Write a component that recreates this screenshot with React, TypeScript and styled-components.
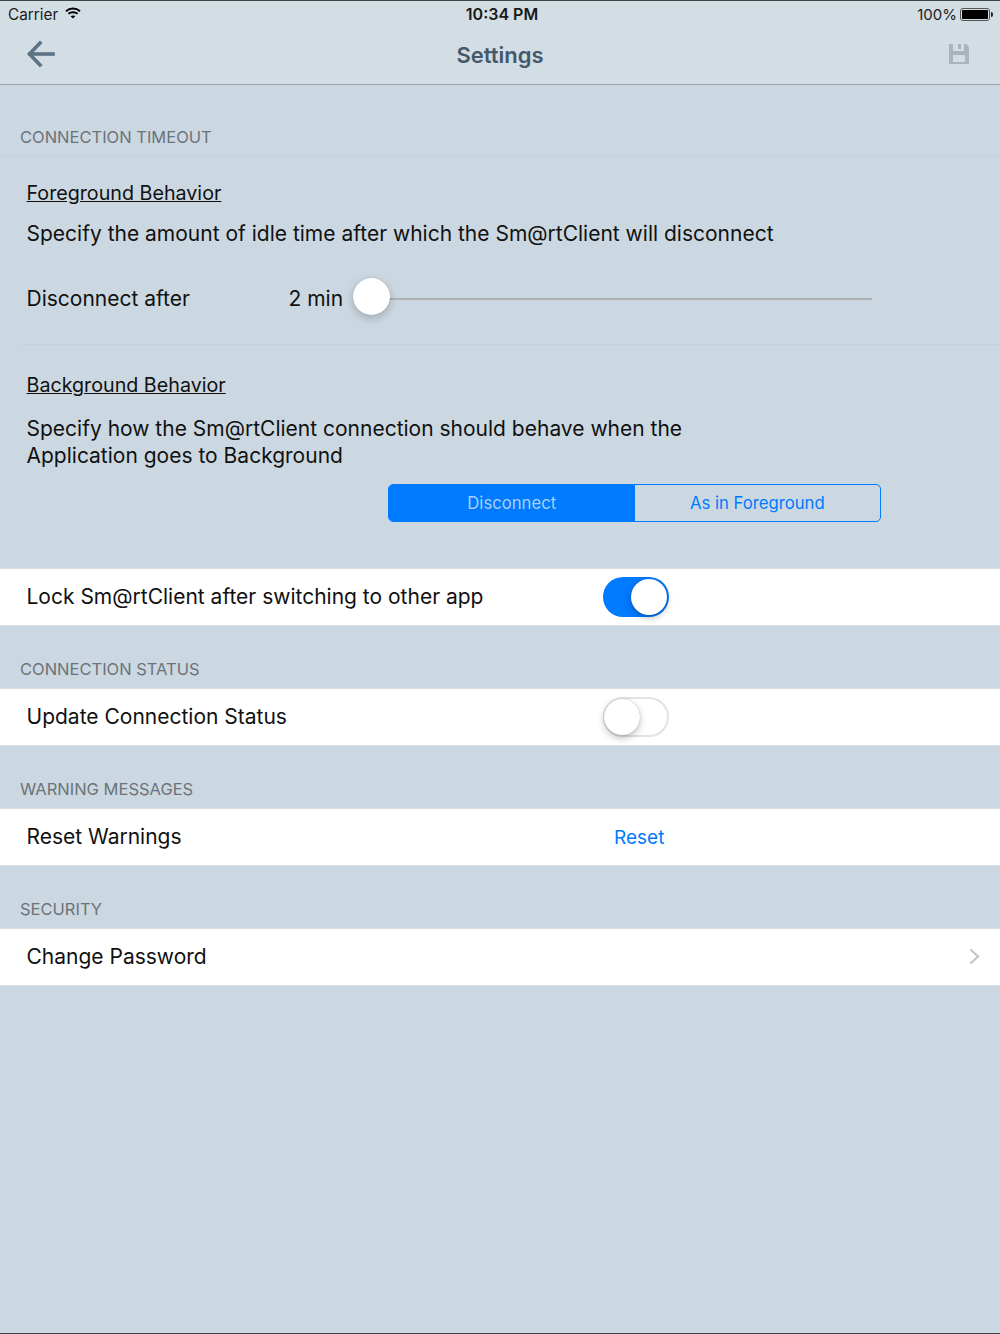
import styled, { createGlobalStyle } from "styled-components";

const GlobalStyle = createGlobalStyle`
  html, body {
    margin: 0;
    padding: 0;
    background: #cbd8e1;
  }
  * {
    box-sizing: border-box;
  }
`;

const BackIcon = () => (
  <svg width="30" height="28" viewBox="0 0 30 28" fill="none" stroke="#5c7285" strokeWidth="3.6" strokeLinecap="square">
    <path d="M27 14H4" />
    <path d="M14 3L3.5 14L14 25" />
  </svg>
);

const SaveIcon = () => (
  <svg width="20" height="20" viewBox="0 0 20 20">
    <path
      fill="#a9b4bc"
      fillRule="evenodd"
      d="M0 0H17L20 3V20H0ZM4 0V7H15V0H12V5H9V0ZM4 11V18H16V11Z"
    />
  </svg>
);

const WifiIcon = () => (
  <svg width="16" height="12" viewBox="0 0 16 12" fill="none" stroke="#000" strokeWidth="2">
    <path d="M1 4.2C5 .6 11 .6 15 4.2" />
    <path d="M3.4 6.8C6 4.6 10 4.6 12.6 6.8" />
    <path d="M8 11.6L5.6 9.2C7 8.2 9 8.2 10.4 9.2Z" fill="#000" stroke="none" />
  </svg>
);

const ChevronIcon = () => (
  <svg width="11" height="17" viewBox="0 0 11 17" fill="none" stroke="#c4c4c7" strokeWidth="2.2">
    <path d="M1.5 1.5L9 8.5L1.5 15.5" />
  </svg>
);

export default function App() {
  return (
    <Page>
      <GlobalStyle />
      <Header>
        <StatusBar>
          <StatusLeft>
            Carrier <WifiIcon />
          </StatusLeft>
          <StatusTime>10:34 PM</StatusTime>
          <StatusRight>
            100%
            <Battery>
              <BatteryFill />
            </Battery>
          </StatusRight>
        </StatusBar>
        <NavBar>
          <BackIcon />
          <NavTitle>Settings</NavTitle>
          <SaveIcon />
        </NavBar>
      </Header>

      <SectionLabel $top={44}>CONNECTION TIMEOUT</SectionLabel>
      <Panel>
        <SubHeading>Foreground Behavior</SubHeading>
        <Description $top={15}>
          Specify the amount of idle time after which the Sm@rtClient will disconnect
        </Description>
        <SliderRow>
          <SliderLabel>Disconnect after</SliderLabel>
          <SliderValue>2 min</SliderValue>
          <SliderTrack>
            <SliderThumb />
          </SliderTrack>
        </SliderRow>
      </Panel>
      <Panel $bordered>
        <SubHeading>Background Behavior</SubHeading>
        <Description $top={18}>
          Specify how the Sm@rtClient connection should behave when the
          <br />
          Application goes to Background
        </Description>
        <SegmentRow>
          <Segment $active>Disconnect</Segment>
          <Segment>As in Foreground</Segment>
        </SegmentRow>
      </Panel>

      <Row $top={46}>
        <RowLabel>Lock Sm@rtClient after switching to other app</RowLabel>
        <Toggle $on>
          <ToggleKnob $on />
        </Toggle>
      </Row>

      <SectionLabel $top={35}>CONNECTION STATUS</SectionLabel>
      <Row>
        <RowLabel>Update Connection Status</RowLabel>
        <Toggle>
          <ToggleKnob />
        </Toggle>
      </Row>

      <SectionLabel $top={35}>WARNING MESSAGES</SectionLabel>
      <Row>
        <RowLabel>Reset Warnings</RowLabel>
        <ResetLink>Reset</ResetLink>
      </Row>

      <SectionLabel $top={35}>SECURITY</SectionLabel>
      <Row>
        <RowLabel>Change Password</RowLabel>
        <RowEnd>
          <ChevronIcon />
        </RowEnd>
      </Row>
    </Page>
  );
}

const Page = styled.div`
  width: 1000px;
  height: 1334px;
  overflow: hidden;
  background: #cbd8e1;
  border-bottom: 1px solid #3f4447;
  color: #111;
  font-family: Inter, "Liberation Sans", sans-serif;
`;

const Header = styled.header`
  height: 85px;
  background: #d2dde4;
  border-top: 1px solid #3f4447;
  border-bottom: 1px solid #98a3aa;
`;

const StatusBar = styled.div`
  height: 27px;
  padding: 0 10px 0 8px;
  display: flex;
  justify-content: space-between;
  align-items: center;
  position: relative;
  font-size: 15.3px;
  color: #1a1a1a;
`;

const StatusLeft = styled.div`
  display: flex;
  align-items: center;
  gap: 7px;
  svg {
    margin-top: -3px;
  }
`;

const StatusTime = styled.div`
  position: absolute;
  left: 0;
  right: -4px;
  margin-top: -2px;
  text-align: center;
  font-size: 16px;
  font-weight: 600;
`;

const StatusRight = styled.div`
  display: flex;
  align-items: center;
  gap: 3px;
  font-size: 15px;
`;

const Battery = styled.div`
  width: 30px;
  height: 13px;
  border: 1px solid #555;
  border-radius: 3px;
  padding: 1px;
  position: relative;
  &::after {
    content: "";
    position: absolute;
    right: -4px;
    top: 3px;
    width: 2px;
    height: 5px;
    background: #222;
    border-radius: 0 2px 2px 0;
  }
`;

const BatteryFill = styled.div`
  height: 100%;
  background: #000;
  border-radius: 1px;
`;

const NavBar = styled.div`
  height: 56px;
  padding: 0 31px 4px 26px;
  display: flex;
  justify-content: space-between;
  align-items: center;
  position: relative;
`;

const NavTitle = styled.h1`
  position: absolute;
  left: 0;
  right: 0;
  margin: 2px 0 0;
  text-align: center;
  font-size: 22px;
  font-weight: 600;
  color: #44596a;
`;

const SectionLabel = styled.div<{ $top: number }>`
  margin-top: ${(props) => props.$top}px;
  padding: 0 20px;
  height: 27px;
  line-height: 16px;
  font-size: 16.5px;
  color: #6d7378;
`;

const Panel = styled.section<{ $bordered?: boolean }>`
  margin-left: ${(props) => (props.$bordered ? 20 : 0)}px;
  padding: ${(props) => (props.$bordered ? "28px 0 0 6.5px" : "24px 0 0 26.5px")};
  border-top: 1px solid #c5d0d9;
  height: ${(props) => (props.$bordered ? "178px" : "188px")};
`;

const SubHeading = styled.h2`
  margin: 0;
  font-size: 19.7px;
  line-height: 24px;
  font-weight: 400;
  text-decoration: underline;
`;

const Description = styled.p<{ $top: number }>`
  margin: ${(props) => props.$top}px 0 0;
  font-size: 21px;
  line-height: 27px;
`;

const SliderRow = styled.div`
  margin-top: 31px;
  display: flex;
  align-items: center;
  height: 40px;
  font-size: 21px;
`;

const SliderLabel = styled.div`
  width: 262px;
`;

const SliderValue = styled.div`
  width: 64.5px;
`;

const SliderTrack = styled.div`
  width: 519px;
  height: 2px;
  margin-top: 2px;
  background: #b0b2b0;
  position: relative;
`;

const SliderThumb = styled.div`
  position: absolute;
  left: 0;
  top: -20px;
  width: 37px;
  height: 37px;
  border-radius: 50%;
  background: #fff;
  box-shadow: 0 3px 8px rgba(0, 0, 0, 0.22), 0 0 1px rgba(0, 0, 0, 0.2);
`;

const SegmentRow = styled.div`
  margin: 15px 0 0 361.5px;
  width: 493px;
  height: 38px;
  display: flex;
  border: 1px solid #007aff;
  border-radius: 5px;
  overflow: hidden;
`;

const Segment = styled.div<{ $active?: boolean }>`
  flex: 1;
  display: flex;
  align-items: center;
  justify-content: center;
  font-size: 16.7px;
  background: ${(props) => (props.$active ? "#007aff" : "transparent")};
  color: ${(props) => (props.$active ? "#a9cff8" : "#007aff")};
`;

const Row = styled.div<{ $top?: number }>`
  margin-top: ${(props) => props.$top ?? 0}px;
  height: 58px;
  padding-left: 26.5px;
  background: #fff;
  border-top: 1px solid #d8dde1;
  border-bottom: 1px solid #d8dde1;
  display: flex;
  align-items: center;
  position: relative;
`;

const RowLabel = styled.div`
  font-size: 21px;
  margin-top: -1px;
`;

const Toggle = styled.div<{ $on?: boolean }>`
  position: absolute;
  left: 603px;
  top: 8px;
  width: 66px;
  height: 40px;
  border-radius: 20px;
  background: ${(props) => (props.$on ? "#007aff" : "#fff")};
  border: ${(props) => (props.$on ? "none" : "2px solid #e3e3e3")};
`;

const ToggleKnob = styled.div<{ $on?: boolean }>`
  position: absolute;
  left: ${(props) => (props.$on ? "28px" : "-1px")};
  top: ${(props) => (props.$on ? "2px" : "0")};
  width: 36px;
  height: 36px;
  border-radius: 50%;
  background: #fff;
  box-shadow: 0 3px 7px rgba(0, 0, 0, 0.25), 0 0 1px rgba(0, 0, 0, 0.3);
`;

const ResetLink = styled.div`
  position: absolute;
  left: 614px;
  font-size: 19px;
  color: #007aff;
`;

const RowEnd = styled.div`
  margin-left: auto;
  margin-right: 20px;
  margin-top: -2px;
  display: flex;
`;
